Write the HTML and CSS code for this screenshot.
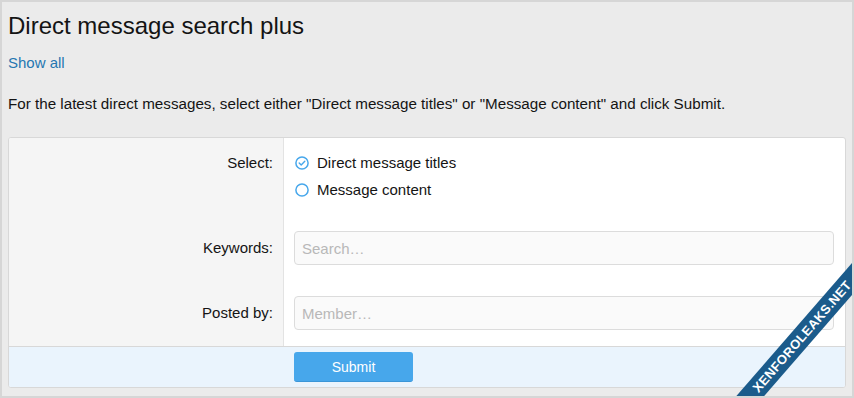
FILE: index.html
```html
<!DOCTYPE html>
<html lang="en">
<head>
    <meta charset="UTF-8">
    <meta name="viewport" content="width=device-width, initial-scale=1.0">
    <title>Direct message search plus</title>
    <link rel="stylesheet" href="styles.css">
</head>
<body>

<div class="page">
    <h1 class="page-title">Direct message search plus</h1>
    <a class="show-all" href="#">Show all</a>
    <p class="intro">For the latest direct messages, select either "Direct message titles" or "Message content" and click Submit.</p>

    <form class="block">
        <div class="form-row form-row--radio">
            <div class="row-label">Select:</div>
            <div class="row-input">
                <label class="radio checked"><span class="radio-icon"><svg viewBox="0 0 14 14" width="14" height="14"><circle cx="7" cy="7" r="6.1" fill="none" stroke="#47a7eb" stroke-width="1.5"/><path d="M4.2 7.1 L6.2 9 L9.8 5.2" fill="none" stroke="#47a7eb" stroke-width="1.4" stroke-linecap="round" stroke-linejoin="round"/></svg></span>Direct message titles</label>
                <label class="radio"><span class="radio-icon"><svg viewBox="0 0 14 14" width="14" height="14"><circle cx="7" cy="7" r="6.1" fill="none" stroke="#47a7eb" stroke-width="1.5"/></svg></span>Message content</label>
            </div>
        </div>
        <div class="form-row">
            <div class="row-label">Keywords:</div>
            <div class="row-input">
                <input class="text-input" type="text" placeholder="Search…">
            </div>
        </div>
        <div class="form-row form-row--last">
            <div class="row-label">Posted by:</div>
            <div class="row-input">
                <input class="text-input" type="text" placeholder="Member…">
            </div>
        </div>
        <div class="form-footer">
            <div class="row-label"></div>
            <div class="row-input">
                <button class="submit-button" type="button">Submit</button>
            </div>
        </div>
    </form>

    <!-- watermark ribbon in the corner -->
    <div class="ribbon">XENFOROLEAKS.NET</div>
</div>

</body>
</html>
```

FILE: styles.css
```css
body {
    margin: 0;
    padding: 0;
    font-family: "Liberation Sans", Arial, sans-serif;
    color: #141414;
    background-color: #ebebeb;
}
.page {
    position: relative;
    box-sizing: border-box;
    height: 398px;
    padding: 10px 6px 0 6px;
    border: 2px solid #d6d6d6;
    overflow: hidden;
}
.page-title {
    margin: 0;
    font-size: 24px;
    font-weight: normal;
    line-height: 28px;
}
.show-all {
    display: inline-block;
    margin-top: 13px;
    font-size: 15px;
    line-height: 20px;
    color: #2577b1;
    text-decoration: none;
}
.intro {
    margin: 21px 0 0;
    font-size: 15.2px;
    line-height: 20px;
}
.block {
    margin-top: 23px;
    border: 1px solid #d8d8d8;
    border-radius: 3px;
    background-color: #fff;
    overflow: hidden;
    font-size: 15px;
}
.form-row, .form-footer {
    display: grid;
    grid-template-columns: 275px 1fr;
}
.row-label {
    background-color: #f5f5f5;
    border-right: 1px solid #e3e3e3;
    text-align: right;
    padding: 16px 10px 15px 0;
    line-height: 34px;
}
.row-input {
    padding: 16px 11px 15px 10px;
}
.form-row--radio .row-label {
    padding: 11px 10px 12px 0;
    line-height: 27px;
}
.form-row--radio .row-input {
    padding: 11px 11px 12px 10px;
}
.form-row--last .row-label,
.form-row--last .row-input {
    padding-bottom: 16px;
}
.radio {
    display: flex;
    align-items: center;
    height: 27px;
    line-height: 27px;
}
.radio-icon {
    display: inline-flex;
    width: 14px;
    height: 14px;
    margin: 0 8px 0 1px;
}
.text-input {
    display: block;
    box-sizing: border-box;
    width: 100%;
    height: 34px;
    padding: 0 7px;
    border: 1px solid #dcdcdc;
    border-radius: 4px;
    background-color: #fafafa;
    font-family: inherit;
    font-size: 15px;
    color: #141414;
}
.text-input::placeholder {
    color: #b8b8b8;
}
.form-footer {
    border-top: 1px solid #d8d8d8;
    background-color: #eaf4fd;
}
.form-footer .row-label {
    background: none;
    border-right: none;
    padding: 0;
}
.form-footer .row-input {
    padding: 5px 10px 5px 10px;
}
.submit-button {
    width: 119px;
    height: 30px;
    border: none;
    border-bottom: 1px solid #3a96d8;
    border-radius: 3px;
    background-color: #47a7eb;
    color: #fff;
    font-family: inherit;
    font-size: 14px;
}
.ribbon {
    position: absolute;
    left: 668px;
    top: 324px;
    width: 264px;
    height: 21px;
    line-height: 21px;
    background-color: #1b5b8b;
    color: #fff;
    font-weight: bold;
    font-size: 13px;
    letter-spacing: 0.3px;
    text-align: center;
    transform: rotate(-49deg);
}
```
